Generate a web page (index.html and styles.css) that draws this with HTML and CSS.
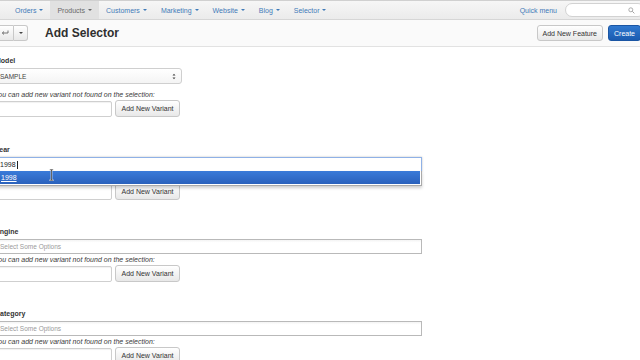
FILE: index.html
```html
<!DOCTYPE html>
<html lang="en">
<head>
    <meta charset="UTF-8">
    <meta name="viewport" content="width=device-width, initial-scale=1.0">
    <title>Add Selector</title>
    <link rel="stylesheet" href="styles.css">
</head>
<body>
    <!-- Top menu -->
    <nav class="topnav">
        <ul class="menu">
            <li>Orders <span class="caret"></span></li>
            <li class="active">Products <span class="caret"></span></li>
            <li>Customers <span class="caret"></span></li>
            <li>Marketing <span class="caret"></span></li>
            <li>Website <span class="caret"></span></li>
            <li>Blog <span class="caret"></span></li>
            <li>Selector <span class="caret"></span></li>
        </ul>
        <div class="quick">
            <a href="#">Quick menu</a>
            <div class="search">
                <svg width="7" height="7" viewBox="0 0 7 7"><circle cx="2.8" cy="2.8" r="2" fill="none" stroke="#999" stroke-width="0.8"/><path d="M4.3 4.3 L6.4 6.4" stroke="#999" stroke-width="0.9"/></svg>
            </div>
        </div>
    </nav>

    <!-- Toolbar -->
    <div class="toolbar">
        <div class="btn-group">
            <span class="btn back">
                <svg width="8" height="6" viewBox="0 0 8 6"><path d="M7 0.5 V3 H1.5 M3 1.5 L1.3 3 L3 4.5" fill="none" stroke="#555" stroke-width="0.8"/></svg>
            </span>
            <span class="btn drop"><span class="caret dark"></span></span>
        </div>
        <h1>Add Selector</h1>
        <div class="actions">
            <span class="btn">Add New Feature</span>
            <span class="btn primary">Create</span>
        </div>
    </div>

    <div class="content">
        <div class="group model">
            <label>Model</label>
            <div class="select-box">
                <span>SAMPLE</span>
                <svg width="4" height="7" viewBox="0 0 4 7"><path d="M0.5 2.5 L2 0.8 L3.5 2.5 Z M0.5 4.5 L2 6.2 L3.5 4.5 Z" fill="#444"/></svg>
            </div>
            <p class="help">You can add new variant not found on the selection:</p>
            <div class="variant-row">
                <input type="text">
                <button class="btn">Add New Variant</button>
            </div>
        </div>

        <div class="group">
            <label>Year</label>
            <div class="chosen active">
                <span class="typed">1998</span><span class="text-caret"></span>
                <div class="chosen-drop">
                    <div class="result"><u>1998</u></div>
                </div>
            </div>
            <p class="help">You can add new variant not found on the selection:</p>
            <div class="variant-row">
                <input type="text">
                <button class="btn">Add New Variant</button>
            </div>
        </div>

        <div class="group">
            <label>Engine</label>
            <div class="chosen">
                <span class="placeholder">Select Some Options</span>
            </div>
            <p class="help">You can add new variant not found on the selection:</p>
            <div class="variant-row">
                <input type="text">
                <button class="btn">Add New Variant</button>
            </div>
        </div>

        <div class="group">
            <label>Category</label>
            <div class="chosen">
                <span class="placeholder">Select Some Options</span>
            </div>
            <p class="help">You can add new variant not found on the selection:</p>
            <div class="variant-row">
                <input type="text">
                <button class="btn">Add New Variant</button>
            </div>
        </div>
    </div>

    <!-- mouse pointer -->
    <svg class="ibeam" width="5" height="12" viewBox="0 0 5 12"><path d="M0.5 0.8 H4.5 M2.5 0.8 V11.2 M0.5 11.2 H4.5" stroke="#fff" stroke-width="1.6"/><path d="M0.8 0.8 H4.2 M2.5 0.8 V11.2 M0.8 11.2 H4.2" stroke="#222" stroke-width="0.7"/></svg>
</body>
</html>
```

FILE: styles.css
```css
body {
    margin: 0;
    width: 640px;
    height: 360px;
    overflow: hidden;
    position: relative;
    font-family: "Liberation Sans", Arial, sans-serif;
    color: #333;
    background: #fff;
}

/* Top menu */
.topnav {
    display: flex;
    align-items: stretch;
    height: 20px;
    box-sizing: border-box;
    padding-left: 8px;
    background: linear-gradient(#f6f6f6, #ebebeb);
    border-top: 1px solid #d0d0d0;
    border-bottom: 1px solid #d6d6d6;
}

.menu {
    display: flex;
    list-style: none;
    margin: 0;
    padding: 0;
}

.menu li {
    display: flex;
    align-items: center;
    padding: 0 7px;
    font-size: 7px;
    color: #3f7ab8;
}

.menu li.active {
    background: #e1e1e1;
    color: #6a6a6a;
}

.caret {
    display: inline-block;
    margin-left: 3px;
    border-left: 2px solid transparent;
    border-right: 2px solid transparent;
    border-top: 2px solid currentColor;
}

.caret.dark {
    margin: 0;
    color: #444;
}

.quick {
    margin-left: auto;
    display: flex;
    align-items: center;
}

.quick a {
    font-size: 7px;
    color: #3f7ab8;
    text-decoration: none;
}

.search {
    width: 80px;
    height: 14px;
    box-sizing: border-box;
    margin-left: 8px;
    margin-right: -5px;
    background: #fff;
    border: 1px solid #d2d2d2;
    border-radius: 7px;
    display: flex;
    align-items: center;
    justify-content: flex-end;
    padding-right: 9px;
}

/* Toolbar */
.toolbar {
    display: flex;
    align-items: center;
    height: 27px;
    box-sizing: border-box;
    background: #fafafa;
    border-bottom: 1px solid #e2e2e2;
}

.btn-group {
    display: flex;
    margin-left: -4px;
}

.btn {
    display: inline-flex;
    align-items: center;
    justify-content: center;
    height: 16px;
    box-sizing: border-box;
    padding: 0 6px;
    white-space: nowrap;
    font-family: inherit;
    font-size: 7px;
    color: #333;
    background: linear-gradient(#ffffff, #e8e8e8);
    border: 1px solid #c8c8c8;
    border-radius: 3px;
}

.btn-group .back {
    width: 18px;
    padding: 0;
    border-radius: 3px 0 0 3px;
}

.btn-group .drop {
    width: 14px;
    padding: 0;
    border-left: 0;
    border-radius: 0 3px 3px 0;
}

h1 {
    margin: 0 0 0 17px;
    font-size: 12px;
    font-weight: bold;
    color: #2f2f2f;
}

.actions {
    margin-left: auto;
    margin-right: -1px;
    display: flex;
    gap: 5px;
}

.actions .btn {
    padding: 0 5px;
}

.btn.primary {
    color: #fff;
    background: linear-gradient(#2f78cf, #1a5bb0);
    border-color: #1a55a3;
    width: 33px;
}

/* Form */
.content {
    margin-left: -6px;
    padding-top: 9px;
}

.group {
    margin-bottom: 27px;
}

.group.model {
    margin-bottom: 28px;
}

label {
    display: block;
    height: 9px;
    line-height: 9px;
    font-size: 7px;
    font-weight: bold;
    color: #333;
    padding-left: 1px;
}

.select-box {
    margin-top: 3px;
    width: 188px;
    height: 16px;
    box-sizing: border-box;
    display: flex;
    align-items: center;
    justify-content: space-between;
    padding: 0 5px;
    font-size: 6.5px;
    color: #444;
    background: linear-gradient(#ffffff, #f4f4f4);
    border: 1px solid #cfcfcf;
    border-radius: 3px;
}

.help {
    margin: 2px 0 0;
    height: 8px;
    line-height: 8px;
    font-size: 7px;
    font-style: italic;
    color: #3a3a3a;
    white-space: nowrap;
}

.model .help {
    margin-top: 7px;
}

.variant-row {
    margin-top: 1px;
    display: flex;
    align-items: center;
    gap: 3px;
}

.variant-row input {
    width: 118px;
    height: 16px;
    box-sizing: border-box;
    margin: 0;
    border: 1px solid #cfcfcf;
    border-radius: 2px;
    box-shadow: inset 0 1px 1px rgba(0, 0, 0, 0.06);
}

.variant-row .btn {
    width: 65px;
    height: 17px;
    padding: 0;
}

.chosen {
    position: relative;
    margin-top: 3px;
    width: 428px;
    height: 15px;
    box-sizing: border-box;
    display: flex;
    align-items: center;
    padding-left: 5px;
    font-size: 6.5px;
    background: linear-gradient(#f3f3f3 0%, #ffffff 20%);
    border: 1px solid #b9b9b9;
}

.placeholder {
    color: #9a9a9a;
}

.chosen.active {
    background: #fff;
    border-color: #8fb1e6;
    box-shadow: 0 0 2px rgba(0, 0, 0, 0.25);
}

.typed {
    color: #222;
    font-size: 7px;
}

.text-caret {
    display: inline-block;
    width: 1px;
    height: 8px;
    margin-left: 1px;
    background: #222;
}

.chosen-drop {
    position: absolute;
    top: 100%;
    left: -1px;
    right: -1px;
    padding: 0 1px 1px;
    background: #fff;
    border: 1px solid #aaa;
    border-top: 0;
    box-shadow: 0 2px 3px rgba(0, 0, 0, 0.2);
    z-index: 2;
}

.result {
    height: 13px;
    line-height: 13px;
    padding-left: 5px;
    font-size: 7px;
    color: #fff;
    background: linear-gradient(#3a7bd9, #2a61bc);
}

.ibeam {
    position: absolute;
    left: 49px;
    top: 169px;
    z-index: 3;
}
```
